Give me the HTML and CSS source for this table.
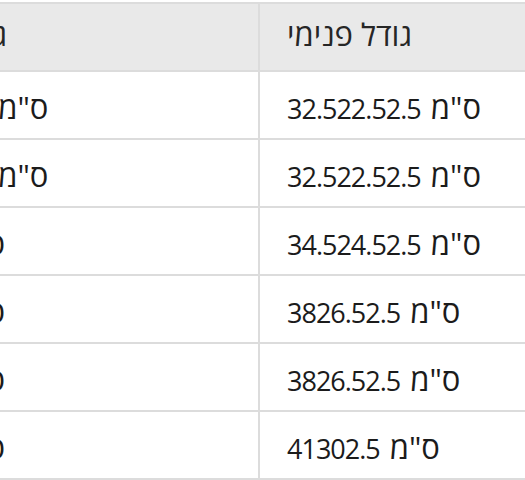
FILE: index.html
```html
<!DOCTYPE html>
<html lang="he" dir="rtl">
<head>
<meta charset="utf-8">
<link rel="stylesheet" href="styles.css">
</head>
<body>
<div class="viewport">
  <table class="sizes">
    <thead>
      <tr>
        <th class="col-inner"><span class="he">גודל פנימי</span></th>
        <th class="col-outer"><span class="he">גודל חיצוני</span></th>
      </tr>
    </thead>
    <tbody>
      <tr><td>32.522.52.5 <span class="he">ס"מ</span></td><td>37.527.57 <span class="he">ס"מ</span></td></tr>
      <tr><td>32.522.52.5 <span class="he">ס"מ</span></td><td>37.527.57 <span class="he">ס"מ</span></td></tr>
      <tr><td>34.524.52.5 <span class="he">ס"מ</span></td><td>43.1.5 <span class="he">ס"מ</span></td></tr>
      <tr><td>3826.52.5 <span class="he">ס"מ</span></td><td>43.1.5 <span class="he">ס"מ</span></td></tr>
      <tr><td>3826.52.5 <span class="he">ס"מ</span></td><td>43.1.5 <span class="he">ס"מ</span></td></tr>
      <tr><td>41302.5 <span class="he">ס"מ</span></td><td>46.1.5 <span class="he">ס"מ</span></td></tr>
    </tbody>
  </table>
</div>
</body>
</html>
```

FILE: styles.css
```css
html, body {
  margin: 0;
  padding: 0;
  background: #ffffff;
}
.viewport {
  width: 525px;
  height: 480px;
  overflow: hidden;
  padding-top: 2px;
  box-sizing: border-box;
}
.sizes {
  direction: rtl;
  border-collapse: collapse;
  margin-right: -40px;
  font-family: "Open Sans", "DejaVu Sans", sans-serif;
  font-size: 27px;
  color: #1b1b1b;
}
.sizes th,
.sizes td {
  direction: ltr;
  height: 68px;
  padding: 0 27px 0 27px;
  text-align: left;
  border: 2px solid #dcdcdc;
  box-sizing: border-box;
  white-space: nowrap;
  vertical-align: middle;
}
.sizes td {
  padding-top: 6px;
  letter-spacing: -1px;
  word-spacing: 4px;
}
.sizes th {
  background: #e9e9e9;
  font-weight: normal;
  color: #262626;
  padding-bottom: 4px;
}
.he {
  font-size: 31px;
  line-height: 1;
  letter-spacing: 0;
}
.col-inner {
  width: 305px;
  min-width: 305px;
}
.col-outer {
  width: 412px;
  min-width: 412px;
}
```
